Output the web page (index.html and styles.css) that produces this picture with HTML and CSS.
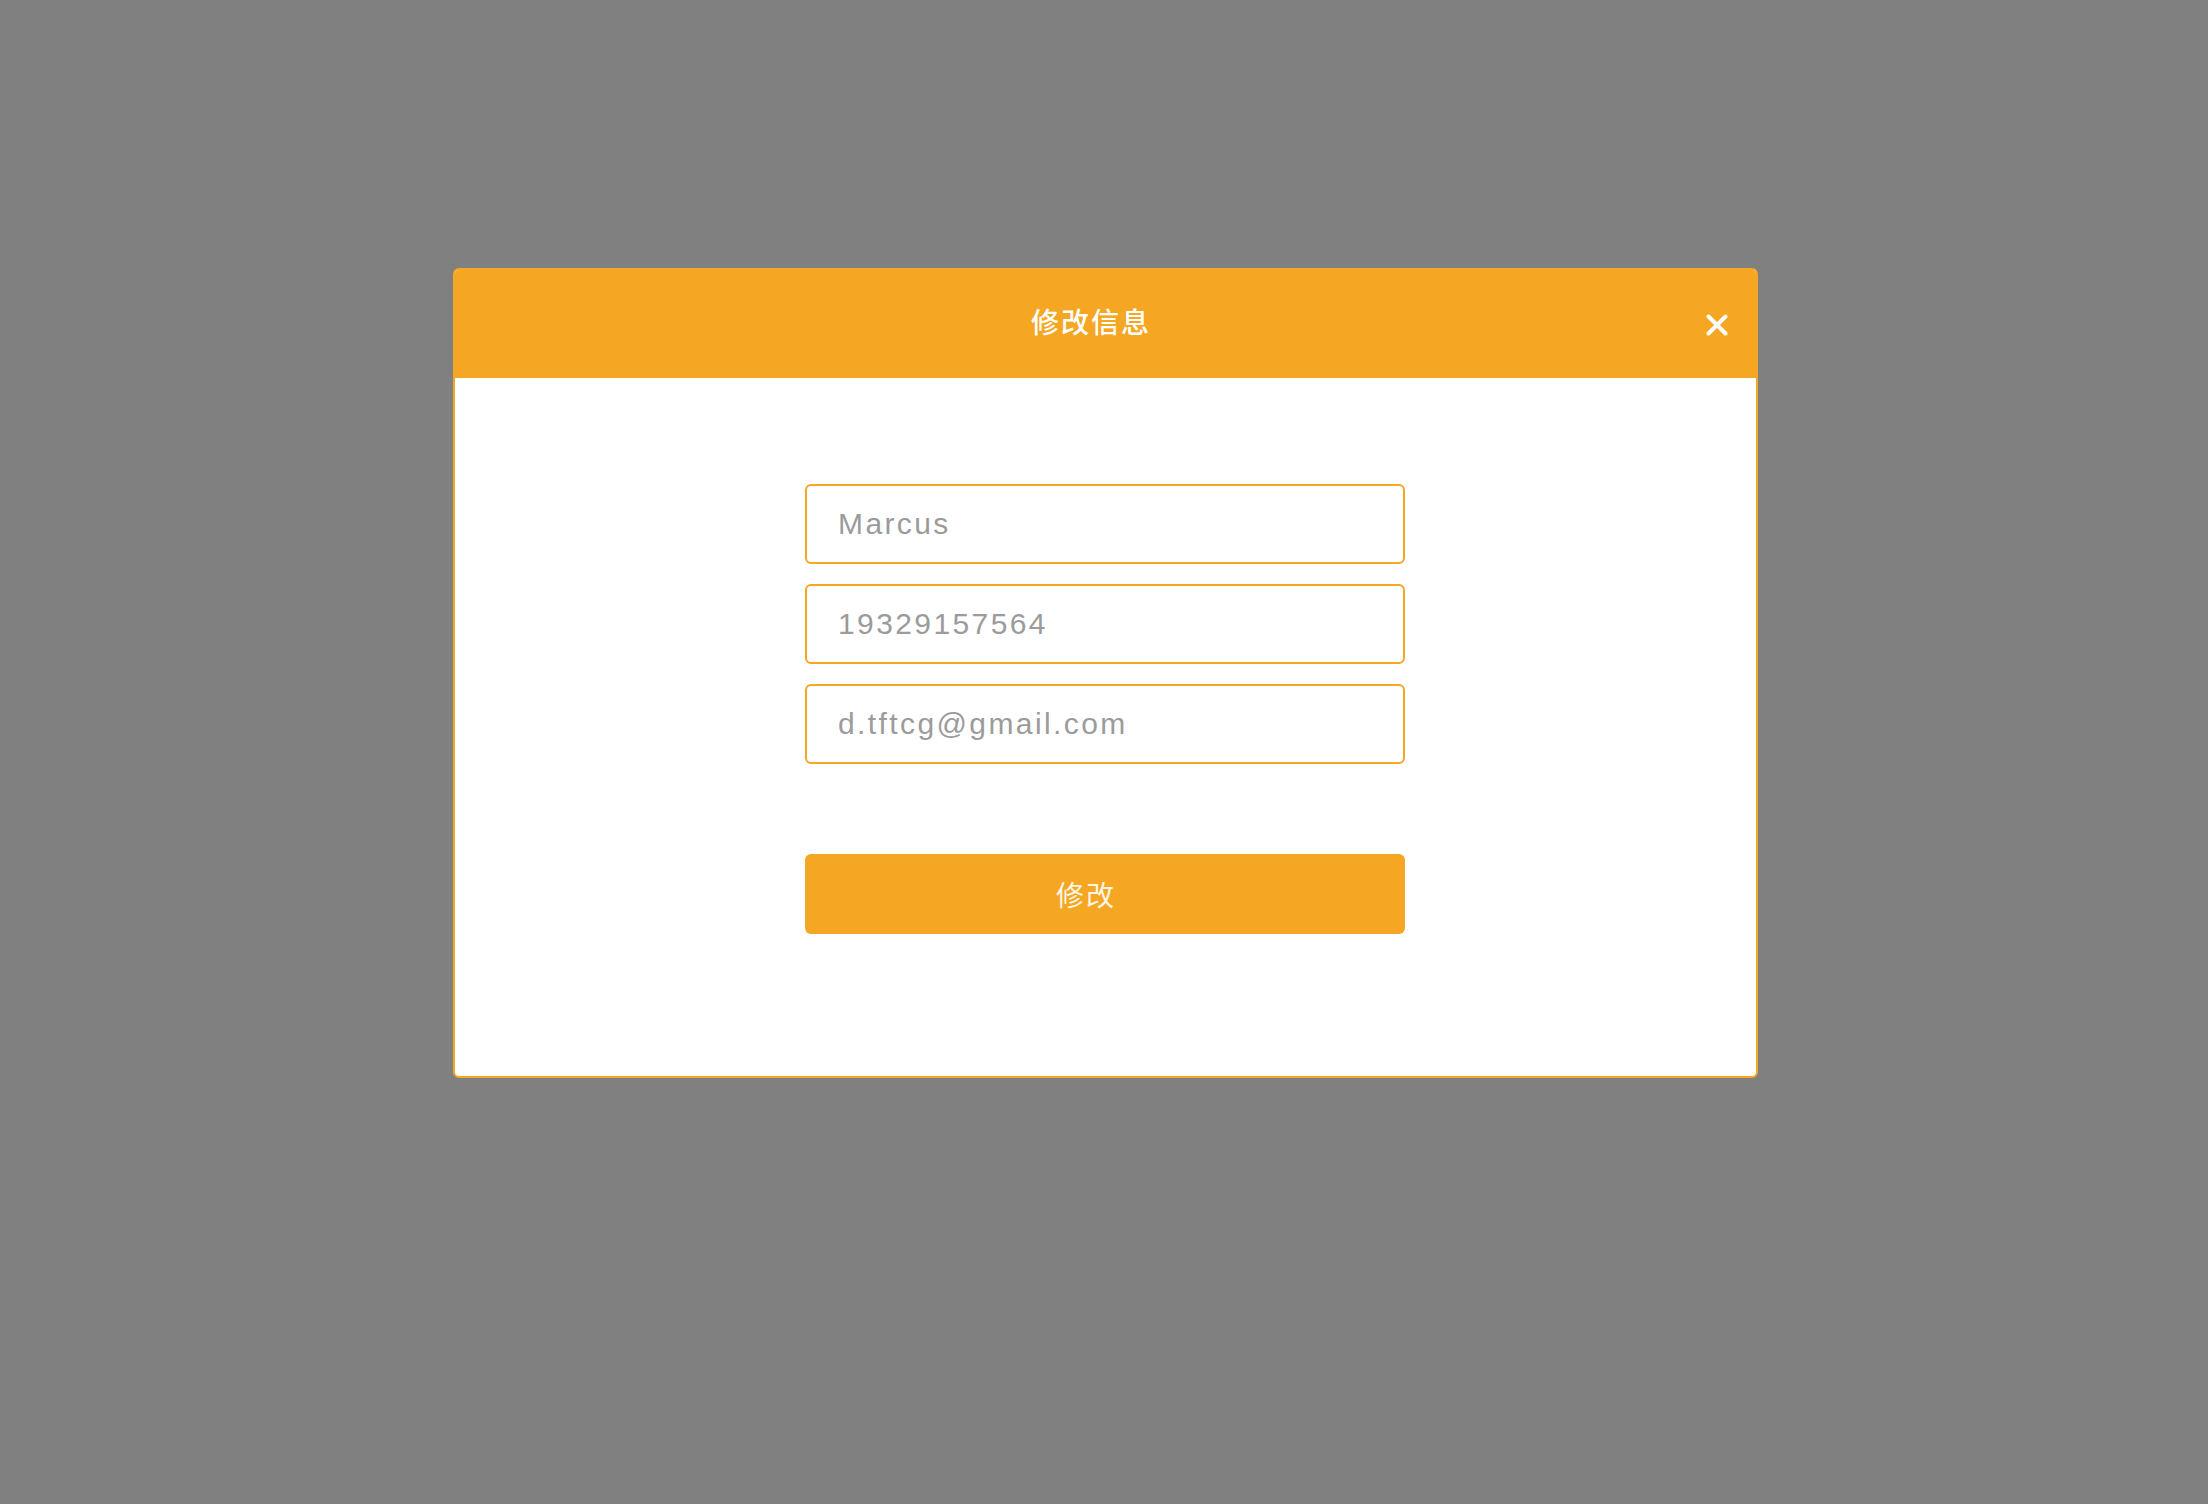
FILE: index.html
```html
<!DOCTYPE html>
<html lang="zh">
<head>
  <meta charset="utf-8">
  <title>修改信息</title>
  <link rel="stylesheet" href="styles.css">
</head>
<body>

  <div class="modal">
    <div class="modal-header">
      <h2 class="modal-title">修改信息</h2>
      <button class="close-btn" type="button" aria-label="关闭">
        <svg width="22" height="22" viewBox="0 0 22 22">
          <path d="M2.5 2.5 L19.5 19.5 M19.5 2.5 L2.5 19.5" stroke="#fff" stroke-width="4" stroke-linecap="round"/>
        </svg>
      </button>
    </div>

    <form class="edit-form" id="editForm">
      <input class="field" type="text" name="name" value="Marcus">
      <input class="field" type="text" name="phone" value="19329157564">
      <input class="field" type="text" name="email" value="d.tftcg@gmail.com">
      <button class="submit-btn" type="submit">修改</button>
    </form>
  </div>

</body>
</html>
```

FILE: styles.css
```css
body {
  margin: 0;
  background-color: rgb(128, 128, 128);
  font-family: "Liberation Sans", "Noto Sans CJK SC", sans-serif;
  height: 100vh;
  display: flex;
  justify-content: center;
  align-items: flex-start;
}

.modal {
  margin-top: 268px;
  margin-left: 2px;
  width: 1305px;
  box-sizing: border-box;
  background-color: #fff;
  border: 2px solid #f5a623;
  border-radius: 6px;
  overflow: hidden;
}

.modal-header {
  height: 108px;
  background-color: #f5a623;
  display: flex;
  align-items: center;
}

.modal-title {
  flex: 1;
  margin: 0 0 6px;
  padding-left: 22px;
  text-align: center;
  color: #fff;
  font-family: "Noto Sans CJK SC", sans-serif;
  font-size: 28px;
  font-weight: 500;
  letter-spacing: 2px;
}

.close-btn {
  width: 22px;
  height: 22px;
  padding: 0;
  margin: 2px 28px 0 0;
  border: none;
  background: none;
  cursor: pointer;
  display: flex;
}

.edit-form {
  width: 600px;
  margin: 0 auto;
  padding: 106px 0 142px;
  display: flex;
  flex-direction: column;
}

.field {
  height: 80px;
  box-sizing: border-box;
  margin-bottom: 20px;
  padding: 0 31px;
  border: 2px solid #f5a623;
  border-radius: 6px;
  font-family: "Liberation Sans", sans-serif;
  font-size: 30px;
  letter-spacing: 2.4px;
  color: #9b9b9b;
  outline: none;
}

.field:nth-of-type(3) {
  margin-bottom: 90px;
}

.submit-btn {
  height: 80px;
  border: none;
  border-radius: 6px;
  padding: 0 38px 0 0;
  background-color: #f5a623;
  color: #fdf5e6;
  font-family: "Noto Sans CJK SC", sans-serif;
  font-size: 28px;
  letter-spacing: 2px;
  cursor: pointer;
}
```
